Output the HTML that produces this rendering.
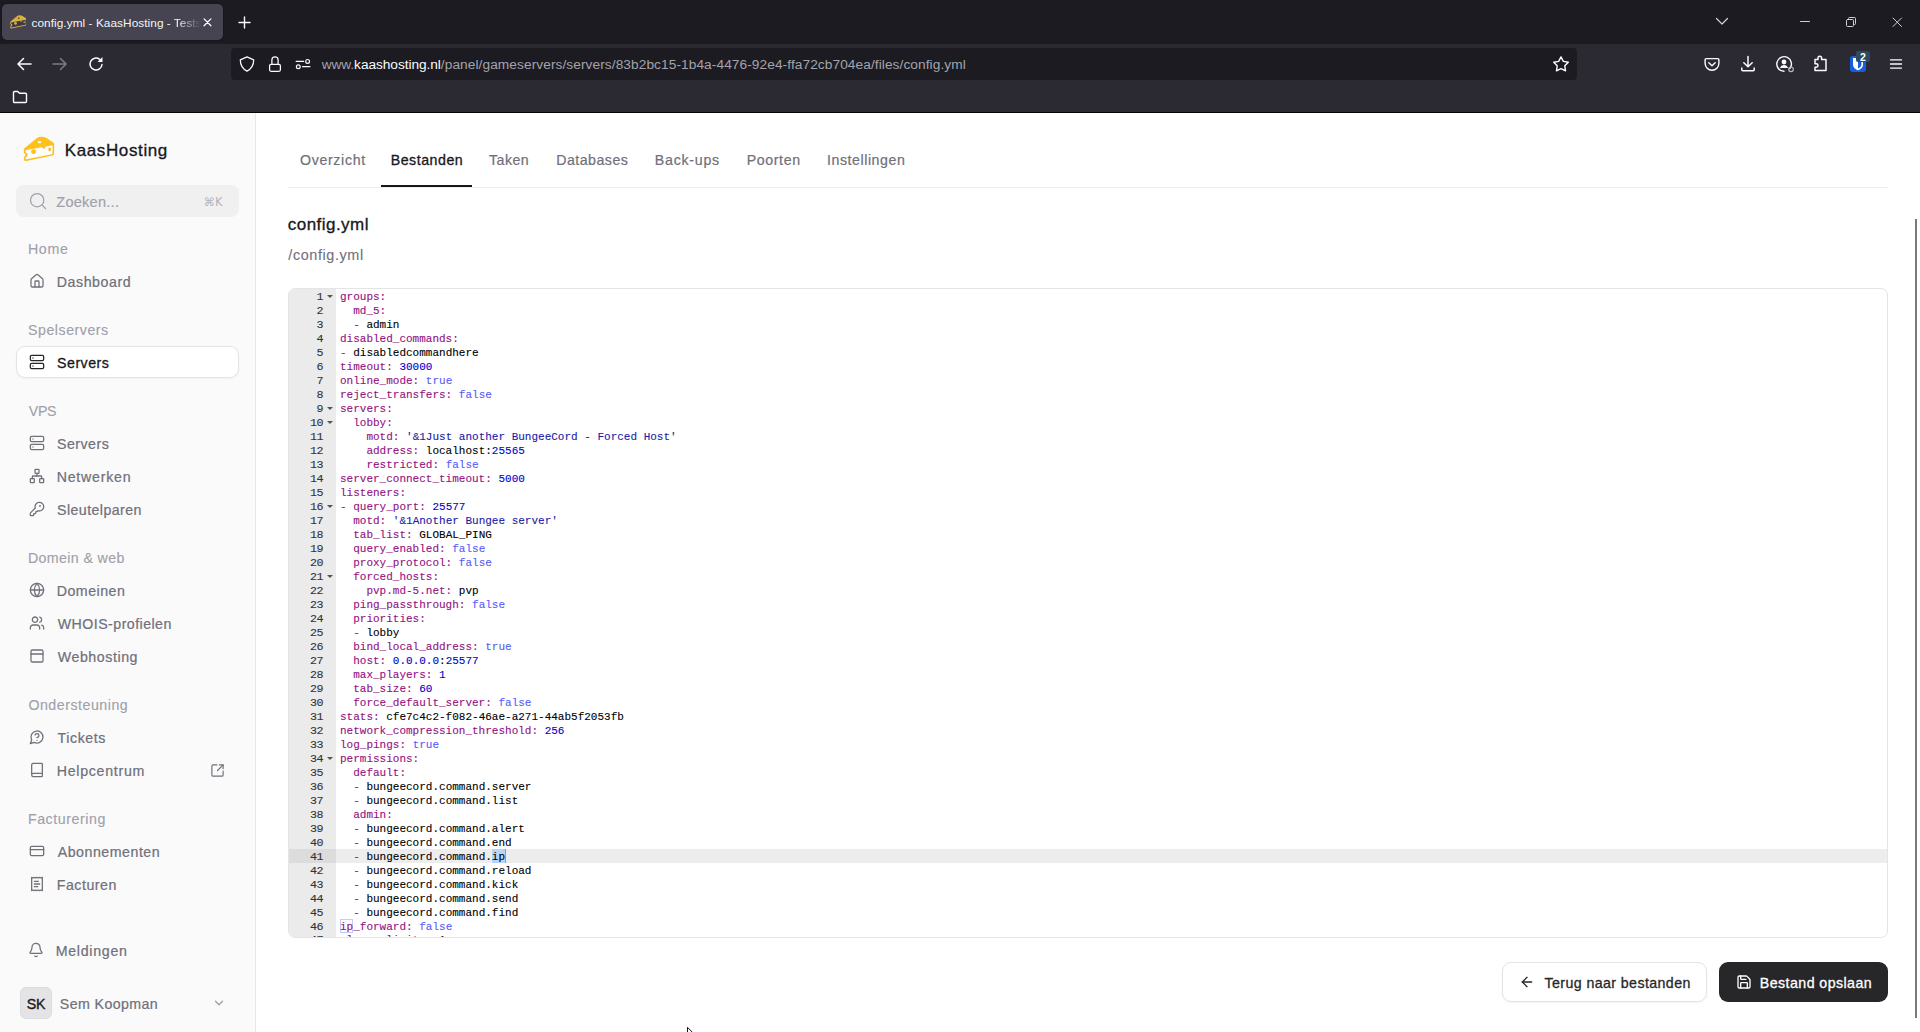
<!DOCTYPE html>
<html lang="nl"><head><meta charset="utf-8"><title>config.yml - KaasHosting - Tests</title>
<style>
*{box-sizing:border-box;margin:0;padding:0}
html,body{width:1920px;height:1032px;overflow:hidden;background:#fff}
body{font-family:"Liberation Sans",sans-serif;position:relative;color:#18181b}
.abs{position:absolute}
.t{position:absolute;white-space:nowrap;line-height:1;transform:translateY(-50%)}
svg{display:block}
/* ---------- browser chrome ---------- */
#chrome{position:absolute;left:0;top:0;width:1920px;height:113px;background:#2b2a33}
#tabbar{position:absolute;left:0;top:0;width:1920px;height:44px;background:#1c1b22}
#tab{position:absolute;left:2px;top:4px;width:221px;height:36px;border-radius:5px;background:#454450;box-shadow:0 0 2px rgba(0,0,0,.5)}
#tabrest{-webkit-mask-image:linear-gradient(90deg,#000 0,#000 12px,transparent 34px);mask-image:linear-gradient(90deg,#000 0,#000 12px,transparent 34px)}
#urlbar{position:absolute;left:231px;top:48px;width:1346px;height:32px;border-radius:4px;background:#1c1b22}
#chromeline{position:absolute;left:0;top:112px;width:1920px;height:1px;background:#050507}
.ci{position:absolute;stroke:#fbfbfe;fill:none;stroke-width:1.3;stroke-linecap:round;stroke-linejoin:round}
/* ---------- sidebar ---------- */
#side{position:absolute;left:0;top:113px;width:256px;height:919px;background:#fafafa;border-right:1px solid #e7e7e9}
.sh{color:#a0a0ab;font-size:14.4px;left:28px}
.si{color:#70707b;font-size:14.7px;font-weight:400;left:57px;letter-spacing:.1px;-webkit-text-stroke:.35px #70707b}
.ic{position:absolute;left:29px;width:16px;height:16px;stroke:#70707b;fill:none;stroke-width:1.25;stroke-linecap:round;stroke-linejoin:round}
/* ---------- main ---------- */
.tab{font-size:15.2px;color:#70707b;top:160px;-webkit-text-stroke:.3px #70707b}
#ed{position:absolute;left:288px;top:288px;width:1600px;height:650px;border:1px solid #e4e4e7;border-radius:7px;overflow:hidden;background:#fff;
 font-family:"Liberation Mono",monospace;font-size:11px;line-height:14px}
#gut{position:absolute;left:0;top:0;width:47px;height:100%;background:#ebebeb}
.ln{position:absolute;left:0;width:34.1px;text-align:right;color:#333;height:14px;white-space:pre;font-size:11.7px;letter-spacing:-.42px;-webkit-text-stroke:.1px #333}
.fold{position:absolute;left:37.8px;width:0;height:0;border-left:3.1px solid transparent;border-right:3.1px solid transparent;border-top:3.6px solid #555}
.cl{position:absolute;left:51px;height:14px;white-space:pre;color:#000;-webkit-text-stroke:.1px currentColor}
.k{color:#930f80}.l{color:#b90690}.n{color:#0000cd}.b{color:#585cf6}.s{color:#1a1aa6}
</style></head><body>
<div id="chrome">
 <div id="tabbar"></div>
 <div id="tab"></div>
 <!-- favicon cheese -->
 <svg class="abs" style="left:9.600px;top:14.900px" width="16.800" height="13.900" viewBox="23.300 136.200 31.300 25.700" preserveAspectRatio="none"><path d="M23.800 149.400 Q23.800 148.700 24.400 148.200 L37.300 137.800 Q38.600 136.700 41 136.700 Q44.500 136.700 46.500 137.900 L53.300 142.500 Q54.100 143.100 54.100 144.200 L54.100 153.800 Q54.100 155.300 52.700 155.600 L26.200 161 Q23.800 161.400 23.800 159.300 L23.800 157.800 L25.600 154.800 L23.800 152.600 Z" fill="#d9b23e"/>
<path d="M25.600 150.200 L52.500 145.200 L52.500 153.400 Q52.500 154.100 51.800 154.250 L26.600 159.300 Q25.500 159.500 25.500 158.500 L25.500 158 L28 154.800 L25.500 151.800 Z" fill="#3b3a47"/>
<path d="M41.800 147 L46.300 146.100 L44.600 148.500 Q43.800 149.200 43.100 148.500 Z" fill="#d9b23e"/>
<ellipse cx="33.600" cy="151.700" rx="2.500" ry="2.400" fill="#d9b23e"/>
<ellipse cx="49.700" cy="149.400" rx="1.400" ry="1.800" fill="#d9b23e"/>
<rect x="37.900" y="141" width="3.200" height="2.300" rx=".7" fill="#3b3a47"/></svg>
 <div class="t " id="t34" style="left:31.50px;top:23.60px;font-size:11.8px;color:#f4f4f8;letter-spacing:0.065px;">config.yml - KaasHosting</div><div class="t" id="tabrest" style="left:166.7px;top:23.6px;font-size:11.8px;color:#f4f4f8;letter-spacing:0.065px">- Tests</div>
 <svg class="ci" style="left:202px;top:17px;stroke-width:1.300" width="11" height="11" viewBox="0 0 11 11"><path d="M2.100 1.900l6.800 6.800M8.900 1.900l-6.800 6.800"/></svg>
 <svg class="ci" style="left:238px;top:16px;stroke-width:1.4" width="13" height="13" viewBox="0 0 13 13"><path d="M6.5 1v11M1 6.5h11"/></svg>
 <!-- window controls -->
 <svg class="ci" style="left:1715px;top:17px;stroke:#d0cfd6;stroke-width:1.2" width="14" height="9" viewBox="0 0 14 9"><path d="M1.500 1.500l5.500 5.500 5.500-5.500"/></svg>
 <svg class="ci" style="left:1799px;top:20px;stroke:#d0cfd6;stroke-width:1" width="12" height="3" viewBox="0 0 12 3"><path d="M1.500 1.500h9"/></svg>
 <svg class="ci" style="left:1845px;top:16px;stroke:#d0cfd6;stroke-width:1" width="12" height="12" viewBox="0 0 12 12"><rect x="1.5" y="3.5" width="7" height="7" rx="1"/><path d="M3.5 3.5v-1a1 1 0 0 1 1-1h5a1 1 0 0 1 1 1v5a1 1 0 0 1-1 1h-1"/></svg>
 <svg class="ci" style="left:1891px;top:16px;stroke:#d0cfd6;stroke-width:1" width="12" height="12" viewBox="0 0 12 12"><path d="M2 2l8.500 8.500M10.500 2L2 10.500"/></svg>
 <!-- nav buttons -->
 <svg class="ci" style="left:16px;top:56px;stroke-width:1.5" width="16" height="16" viewBox="0 0 16 16"><path d="M15 8H2M7.5 2.5L2 8l5.500 5.500"/></svg>
 <svg class="ci" style="left:52px;top:56px;stroke:#7d7c85;stroke-width:1.5" width="16" height="16" viewBox="0 0 16 16"><path d="M1 8h13M8.500 2.500L14 8l-5.500 5.500"/></svg>
 <svg class="ci" style="left:88px;top:56px;stroke-width:1.5" width="16" height="16" viewBox="0 0 16 16"><path d="M14 8.500a6 6 0 1 1-2.300-5.200"/><path d="M14.500 1v5h-5z" fill="#fbfbfe" stroke="none"/></svg>
 <div id="urlbar"></div>
 <svg class="ci" style="left:239px;top:56px;stroke-width:1.250" width="16" height="16" viewBox="0 0 16 16"><path d="M8 .9L1.300 3.900c0 5.200 2 8.600 6.700 11.200 4.700-2.600 6.700-6 6.700-11.200z"/></svg>
 <svg class="ci" style="left:267px;top:56px;stroke-width:1.250" width="16" height="16" viewBox="0 0 16 16"><rect x="2.600" y="8.300" width="10.800" height="7" rx="1.500"/><path d="M4.900 8.300V3.900a3.100 3.100 0 0 1 6.200 0V8.300"/></svg>
 <svg class="ci" style="left:295px;top:56px;stroke-width:1.200" width="16" height="16" viewBox="0 0 16 16"><path d="M1.200 5.400h7.400"/><circle cx="12.600" cy="5.400" r="1.900"/><path d="M7.500 10.700h7.400"/><circle cx="3.300" cy="10.700" r="1.900"/></svg>
 <div class="t " id="t35" style="left:321.63px;top:65.40px;font-size:13.7px;color:#fbfbfe;letter-spacing:-0.058px;"><span style="color:#a4a3ab">www.</span>kaashosting.nl</div><div class="t " id="t36" style="left:440.84px;top:65.40px;font-size:13.7px;color:#a4a3ab;letter-spacing:0.079px;">/panel/gameservers/servers/83b2bc15-1b4a-4476-92e4-ffa72cb704ea/files/config.yml</div>
 <svg class="ci" style="left:1552px;top:55px;stroke-width:1.4" width="18" height="18" viewBox="0 0 18 18"><path d="M9.00 1.90 L11.35 6.36 L16.32 7.22 L12.80 10.84 L13.53 15.83 L9.00 13.60 L4.47 15.83 L5.20 10.84 L1.68 7.22 L6.65 6.36Z"/></svg>
 <!-- right toolbar -->
 <svg class="ci" style="left:1703px;top:56px;stroke-width:1.400" width="18" height="16" viewBox="0 0 18 16"><path d="M3.200 2.600h11.600a1.100 1.100 0 0 1 1.100 1.100v3.600a6.900 6.900 0 0 1-13.800 0V3.700A1.100 1.100 0 0 1 3.200 2.600z"/><path d="M5.800 6.800L9 9.800l3.200-3"/></svg>
 <svg class="ci" style="left:1740px;top:55px;stroke-width:1.5" width="16" height="18" viewBox="0 0 16 18"><path d="M8 1.500v10M3.800 7.700L8 11.800l4.200-4.100M1.800 13v1.800a1 1 0 0 0 1 1h10.400a1 1 0 0 0 1-1V13"/></svg>
 <svg class="ci" style="left:1775px;top:55px;stroke-width:1.4" width="20" height="18" viewBox="0 0 20 18"><path d="M14.800 13.600A7.300 7.300 0 1 0 9 16.300"/><circle cx="9" cy="7" r="2.400" fill="#fbfbfe" stroke="none"/><path d="M5 13a4.200 4.200 0 0 1 8 0z" fill="#fbfbfe" stroke="none"/><circle cx="16" cy="14.300" r="2.300" stroke="#b8b7bf" stroke-width="1.200"/></svg>
 <svg class="ci" style="left:1812px;top:55px;stroke-width:1.5" width="16" height="18" viewBox="0 0 16 18"><path d="M6 4.500V3a1.800 1.800 0 0 1 3.600 0v1.500H14v11H3v-3.300h1.300a1.700 1.700 0 0 0 0-3.400H3V4.500z"/></svg>
 <div class="abs" style="left:1850px;top:56px;width:16px;height:16px;border-radius:3px;background:#175ddc"></div>
 <svg class="abs" style="left:1852px;top:57px" width="12" height="14" viewBox="0 0 12 14"><path d="M1 1h10v6.500c0 3-2.500 4.800-5 5.800-2.500-1-5-2.800-5-5.800z" fill="#fff"/><path d="M6 2.600h3.400v4.900c0 1.900-1.600 3.200-3.400 4z" fill="#175ddc"/></svg>
 <div class="abs" style="left:1856px;top:51px;width:14px;height:11px;border-radius:2px;background:#2d4b5c"></div>
 <div class="t" style="left:1860px;top:57px;font-size:10.500px;font-weight:700;color:#fff">2</div>
 <svg class="ci" style="left:1889px;top:58px;stroke-width:1.300" width="14" height="12" viewBox="0 0 14 12"><path d="M1.500 1.900h11M1.500 6h11M1.500 10.100h11"/></svg>
 <!-- bookmarks folder -->
 <svg class="ci" style="left:12px;top:89px;stroke-width:1.400" width="16" height="16" viewBox="0 0 16 16"><path d="M1.500 3.500a1 1 0 0 1 1-1h3.300l1.700 1.800h6a1 1 0 0 1 1 1v7.200a1 1 0 0 1-1 1h-11a1 1 0 0 1-1-1z"/></svg>
 <div id="chromeline"></div>
</div>

<div id="side">
<svg class="abs" style="left:16px;top:15px" width="48" height="40" viewBox="16 128 48 40"><path d="M23.800 149.400 Q23.800 148.700 24.400 148.200 L37.300 137.800 Q38.600 136.700 41 136.700 Q44.500 136.700 46.500 137.900 L53.300 142.500 Q54.100 143.100 54.100 144.200 L54.100 153.800 Q54.100 155.300 52.700 155.600 L26.200 161 Q23.800 161.400 23.800 159.300 L23.800 157.800 L25.600 154.800 L23.800 152.600 Z" fill="#fdc01c"/>
<path d="M25.600 150.200 L52.500 145.200 L52.500 153.400 Q52.500 154.100 51.800 154.250 L26.600 159.300 Q25.500 159.500 25.500 158.500 L25.500 158 L28 154.800 L25.500 151.800 Z" fill="#fdfdfd"/>
<path d="M41.800 147 L46.300 146.100 L44.600 148.500 Q43.800 149.200 43.100 148.500 Z" fill="#fdc01c"/>
<ellipse cx="33.600" cy="151.700" rx="2.500" ry="2.400" fill="#fdc01c"/>
<ellipse cx="49.700" cy="149.400" rx="1.400" ry="1.800" fill="#fdc01c"/>
<rect x="37.900" y="141" width="3.200" height="2.300" rx=".7" fill="#fdfdfd"/></svg>
<div class="t " id="t0" style="left:64.72px;top:36.80px;font-size:17px;color:#18181b;letter-spacing:0.622px;-webkit-text-stroke:0.33px #18181b;">KaasHosting</div>
<div class="abs" style="left:16px;top:72px;width:223px;height:32px;border-radius:8px;background:#f0f0f1"></div>
<svg class="ic" style="left:27.7px;top:77.80000000000001px;width:20px;height:20px;stroke:#a0a0ab;stroke-width:1.5;" viewBox="0 0 24 24"><circle cx="11" cy="11" r="8"/><path d="m21 21-4.300-4.300"/></svg>
<div class="t " id="t1" style="left:56.26px;top:89.00px;font-size:14.6px;color:#a0a0ab;letter-spacing:0.231px;-webkit-text-stroke:0.15px #a0a0ab;">Zoeken...</div>
<div class="t" style="left:203.500px;top:90px;font-size:11.500px;color:#b4b4bd;font-family:'DejaVu Sans','Liberation Sans',sans-serif">⌘K</div>
<div class="t " id="t2" style="left:27.93px;top:136.00px;font-size:14.2px;color:#a0a0ab;letter-spacing:0.702px;-webkit-text-stroke:0.12px #a0a0ab;">Home</div>
<svg class="ic" style="left:29px;top:160.0px;width:16px;height:16px;stroke:#70707b;stroke-width:1.9;" viewBox="0 0 24 24"><path d="M15 21v-8a1 1 0 0 0-1-1h-4a1 1 0 0 0-1 1v8"/><path d="M3 10a2 2 0 0 1 .709-1.528l7-5.999a2 2 0 0 1 2.582 0l7 5.999A2 2 0 0 1 21 10v9a2 2 0 0 1-2 2H5a2 2 0 0 1-2-2z"/></svg>
<div class="t " id="t3" style="left:56.74px;top:168.70px;font-size:14.2px;color:#70707b;letter-spacing:0.560px;-webkit-text-stroke:0.22px #70707b;">Dashboard</div>
<div class="t " id="t4" style="left:28.08px;top:217.00px;font-size:14.2px;color:#a0a0ab;letter-spacing:0.514px;-webkit-text-stroke:0.12px #a0a0ab;">Spelservers</div>
<div class="abs" style="left:16px;top:233px;width:223px;height:32px;border-radius:9px;background:#fff;border:1px solid #e4e4e7;box-shadow:0 1px 2px rgba(0,0,0,.04)"></div>
<svg class="ic" style="left:29px;top:241.0px;width:16px;height:16px;stroke:#27272a;stroke-width:1.9;" viewBox="0 0 24 24"><rect width="20" height="8" x="2" y="2" rx="2" ry="2"/><rect width="20" height="8" x="2" y="14" rx="2" ry="2"/><path d="M6 6h.01M6 18h.01"/></svg>
<div class="t " id="t5" style="left:57.11px;top:249.70px;font-size:14.2px;color:#18181b;letter-spacing:0.465px;-webkit-text-stroke:0.3px #18181b;">Servers</div>
<div class="t " id="t6" style="left:28.74px;top:298.00px;font-size:14.2px;color:#a0a0ab;letter-spacing:-0.284px;-webkit-text-stroke:0.12px #a0a0ab;">VPS</div>
<svg class="ic" style="left:29px;top:322.0px;width:16px;height:16px;stroke:#70707b;stroke-width:1.9;" viewBox="0 0 24 24"><rect width="20" height="8" x="2" y="2" rx="2" ry="2"/><rect width="20" height="8" x="2" y="14" rx="2" ry="2"/><path d="M6 6h.01M6 18h.01"/></svg>
<div class="t " id="t7" style="left:56.99px;top:330.70px;font-size:14.2px;color:#70707b;letter-spacing:0.489px;-webkit-text-stroke:0.22px #70707b;">Servers</div>
<svg class="ic" style="left:29px;top:355.0px;width:16px;height:16px;stroke:#70707b;stroke-width:1.9;" viewBox="0 0 24 24"><rect x="16" y="16" width="6" height="6" rx="1"/><rect x="2" y="16" width="6" height="6" rx="1"/><rect x="9" y="2" width="6" height="6" rx="1"/><path d="M5 16v-3a1 1 0 0 1 1-1h12a1 1 0 0 1 1 1v3"/><path d="M12 12V8"/></svg>
<div class="t " id="t8" style="left:56.74px;top:363.70px;font-size:14.2px;color:#70707b;letter-spacing:0.750px;-webkit-text-stroke:0.22px #70707b;">Netwerken</div>
<svg class="ic" style="left:29px;top:388.0px;width:16px;height:16px;stroke:#70707b;stroke-width:1.9;" viewBox="0 0 24 24"><path d="M2.586 17.414A2 2 0 0 0 2 18.828V21a1 1 0 0 0 1 1h3a1 1 0 0 0 1-1v-1a1 1 0 0 1 1-1h1a1 1 0 0 0 1-1v-1a1 1 0 0 1 1-1h.172a2 2 0 0 0 1.414-.586l.814-.814a6.500 6.500 0 1 0-4-4z"/><circle cx="16.500" cy="7.500" r=".5"/></svg>
<div class="t " id="t9" style="left:56.99px;top:396.70px;font-size:14.2px;color:#70707b;letter-spacing:0.441px;-webkit-text-stroke:0.22px #70707b;">Sleutelparen</div>
<div class="t " id="t10" style="left:27.93px;top:445.00px;font-size:14.2px;color:#a0a0ab;letter-spacing:0.378px;-webkit-text-stroke:0.12px #a0a0ab;">Domein &amp; web</div>
<svg class="ic" style="left:29px;top:469.0px;width:16px;height:16px;stroke:#70707b;stroke-width:1.9;" viewBox="0 0 24 24"><circle cx="12" cy="12" r="10"/><path d="M12 2a14.500 14.500 0 0 0 0 20 14.500 14.500 0 0 0 0-20"/><path d="M2 12h20"/></svg>
<div class="t " id="t11" style="left:56.74px;top:477.70px;font-size:14.2px;color:#70707b;letter-spacing:0.490px;-webkit-text-stroke:0.22px #70707b;">Domeinen</div>
<svg class="ic" style="left:29px;top:502.0px;width:16px;height:16px;stroke:#70707b;stroke-width:1.9;" viewBox="0 0 24 24"><path d="M16 21v-2a4 4 0 0 0-4-4H6a4 4 0 0 0-4 4v2"/><circle cx="9" cy="7" r="4"/><path d="M22 21v-2a4 4 0 0 0-3-3.870"/><path d="M16 3.130a4 4 0 0 1 0 7.750"/></svg>
<div class="t " id="t12" style="left:57.78px;top:510.70px;font-size:14.2px;color:#70707b;letter-spacing:0.455px;-webkit-text-stroke:0.22px #70707b;">WHOIS-profielen</div>
<svg class="ic" style="left:29px;top:535.0px;width:16px;height:16px;stroke:#70707b;stroke-width:1.9;" viewBox="0 0 24 24"><rect width="18" height="18" x="3" y="3" rx="2"/><path d="M3 9h18"/></svg>
<div class="t " id="t13" style="left:57.78px;top:543.70px;font-size:14.2px;color:#70707b;letter-spacing:0.564px;-webkit-text-stroke:0.22px #70707b;">Webhosting</div>
<div class="t " id="t14" style="left:28.39px;top:592.00px;font-size:14.2px;color:#a0a0ab;letter-spacing:0.521px;-webkit-text-stroke:0.12px #a0a0ab;">Ondersteuning</div>
<svg class="ic" style="left:29px;top:616.0px;width:16px;height:16px;stroke:#70707b;stroke-width:1.9;" viewBox="0 0 24 24"><path d="M7.900 20A9 9 0 1 0 4 16.100L2 22Z"/><path d="M9.090 9a3 3 0 0 1 5.830 1c0 2-3 3-3 3"/><path d="M12 17h.01"/></svg>
<div class="t " id="t15" style="left:57.60px;top:624.70px;font-size:14.2px;color:#70707b;letter-spacing:0.570px;-webkit-text-stroke:0.22px #70707b;">Tickets</div>
<svg class="ic" style="left:29px;top:649.0px;width:16px;height:16px;stroke:#70707b;stroke-width:1.9;" viewBox="0 0 24 24"><path d="M4 19.500v-15A2.500 2.500 0 0 1 6.500 2H19a1 1 0 0 1 1 1v18a1 1 0 0 1-1 1H6.500a1 1 0 0 1 0-5H20"/></svg>
<div class="t " id="t16" style="left:56.74px;top:657.70px;font-size:14.2px;color:#70707b;letter-spacing:0.715px;-webkit-text-stroke:0.22px #70707b;">Helpcentrum</div>
<svg class="ic" style="left:210px;top:649.5px;width:15px;height:15px;stroke:#70707b;stroke-width:1.9;" viewBox="0 0 24 24"><path d="M21 13v6a2 2 0 0 1-2 2H5a2 2 0 0 1-2-2V5a2 2 0 0 1 2-2h6"/><path d="m21 3-9 9"/><path d="M15 3h6v6"/></svg>
<div class="t " id="t17" style="left:27.93px;top:706.00px;font-size:14.2px;color:#a0a0ab;letter-spacing:0.566px;-webkit-text-stroke:0.12px #a0a0ab;">Facturering</div>
<svg class="ic" style="left:29px;top:730.0px;width:16px;height:16px;stroke:#70707b;stroke-width:1.9;" viewBox="0 0 24 24"><rect width="20" height="14" x="2" y="5" rx="2"/><path d="M2 10h20"/></svg>
<div class="t " id="t18" style="left:57.71px;top:738.70px;font-size:14.2px;color:#70707b;letter-spacing:0.519px;-webkit-text-stroke:0.22px #70707b;">Abonnementen</div>
<svg class="ic" style="left:29px;top:763.0px;width:16px;height:16px;stroke:#70707b;stroke-width:1.9;" viewBox="0 0 24 24"><path d="M4 2v20l2-1 2 1 2-1 2 1 2-1 2 1 2-1 2 1V2l-2 1-2-1-2 1-2-1-2 1-2-1-2 1Z"/><path d="M14 8H8"/><path d="M16 12H8"/><path d="M13 16H8"/></svg>
<div class="t " id="t19" style="left:56.74px;top:771.70px;font-size:14.2px;color:#70707b;letter-spacing:0.519px;-webkit-text-stroke:0.22px #70707b;">Facturen</div>
<svg class="ic" style="left:28px;top:829.0px;width:16px;height:16px;stroke:#70707b;stroke-width:1.9;" viewBox="0 0 24 24"><path d="M10.268 21a2 2 0 0 0 3.464 0"/><path d="M3.262 15.326A1 1 0 0 0 4 17h16a1 1 0 0 0 .74-1.673C19.410 13.956 18 12.499 18 8A6 6 0 0 0 6 8c0 4.499-1.411 5.956-2.738 7.326"/></svg>
<div class="t " id="t20" style="left:55.65px;top:837.70px;font-size:14.2px;color:#70707b;letter-spacing:0.736px;-webkit-text-stroke:0.22px #70707b;">Meldingen</div>
<div class="abs" style="left:20px;top:874px;width:32px;height:32px;border-radius:6px;background:#e4e4e7;border:1px solid #dcdce0"></div>
<div class="t " id="t21" style="left:26.78px;top:891.00px;font-size:14.2px;color:#18181b;letter-spacing:-0.144px;-webkit-text-stroke:0.35px #18181b;">SK</div>
<div class="t " id="t22" style="left:59.81px;top:890.70px;font-size:14.2px;color:#70707b;letter-spacing:0.402px;-webkit-text-stroke:0.22px #70707b;">Sem Koopman</div>
<svg class="ic" style="left:212px;top:883.0px;width:14px;height:14px;stroke:#a0a0ab;stroke-width:2.3;" viewBox="0 0 24 24"><path d="m6 9 6 6 6-6"/></svg>
</div>
<div class="t " id="t23" style="left:300.03px;top:160.00px;font-size:14.2px;color:#70707b;letter-spacing:0.647px;-webkit-text-stroke:0.2px #70707b;">Overzicht</div>
<div class="t " id="t24" style="left:390.65px;top:160.00px;font-size:14.2px;color:#18181b;letter-spacing:0.528px;-webkit-text-stroke:0.3px #18181b;">Bestanden</div>
<div class="t " id="t25" style="left:488.98px;top:160.00px;font-size:14.2px;color:#70707b;letter-spacing:0.472px;-webkit-text-stroke:0.2px #70707b;">Taken</div>
<div class="t " id="t26" style="left:556.22px;top:160.00px;font-size:14.2px;color:#70707b;letter-spacing:0.476px;-webkit-text-stroke:0.2px #70707b;">Databases</div>
<div class="t " id="t27" style="left:654.83px;top:160.00px;font-size:14.2px;color:#70707b;letter-spacing:0.732px;-webkit-text-stroke:0.2px #70707b;">Back-ups</div>
<div class="t " id="t28" style="left:746.64px;top:160.00px;font-size:14.2px;color:#70707b;letter-spacing:0.621px;-webkit-text-stroke:0.2px #70707b;">Poorten</div>
<div class="t " id="t29" style="left:827.05px;top:160.00px;font-size:14.2px;color:#70707b;letter-spacing:0.542px;-webkit-text-stroke:0.2px #70707b;">Instellingen</div>
<div class="abs" style="left:288px;top:187px;width:1600px;height:1px;background:#efeff1"></div>
<div class="abs" style="left:381px;top:185px;width:91px;height:2px;background:#18181b"></div>
<div class="t " id="t30" style="left:287.76px;top:223.60px;font-size:17px;color:#18181b;letter-spacing:0.463px;-webkit-text-stroke:0.33px #18181b;">config.yml</div>
<div class="t " id="t31" style="left:288.30px;top:255.30px;font-size:14.4px;color:#70707b;letter-spacing:0.604px;-webkit-text-stroke:0.1px #70707b;">/config.yml</div>
<div id="ed"><div id="gut"></div>
<div class="abs" style="left:0;top:560px;width:47px;height:14px;background:#dcdcdc"></div>
<div class="abs" style="left:47px;top:560px;width:1560px;height:14px;background:#ededed"></div>
<div class="abs" style="left:202.79999999999998px;top:560px;width:13.2px;height:14px;background:#b5d5ff"></div>
<div class="abs" style="left:216.0px;top:560px;width:1px;height:14px;background:#999"></div>
<div class="abs" style="left:51px;top:630px;width:13.2px;height:14px;background:#fafaff;border:1px solid #c8c8fa"></div>
<div class="ln" style="top:1px">1</div>
<div class="fold" style="top:5.8px"></div>
<div class="cl" style="top:1px"><span class="k">groups:</span></div>
<div class="ln" style="top:15px">2</div>
<div class="cl" style="top:15px">  <span class="k">md_5:</span></div>
<div class="ln" style="top:29px">3</div>
<div class="cl" style="top:29px">  <span class="l">-</span> admin</div>
<div class="ln" style="top:43px">4</div>
<div class="cl" style="top:43px"><span class="k">disabled_commands:</span></div>
<div class="ln" style="top:57px">5</div>
<div class="cl" style="top:57px"><span class="l">-</span> disabledcommandhere</div>
<div class="ln" style="top:71px">6</div>
<div class="cl" style="top:71px"><span class="k">timeout:</span> <span class="n">30000</span></div>
<div class="ln" style="top:85px">7</div>
<div class="cl" style="top:85px"><span class="k">online_mode:</span> <span class="b">true</span></div>
<div class="ln" style="top:99px">8</div>
<div class="cl" style="top:99px"><span class="k">reject_transfers:</span> <span class="b">false</span></div>
<div class="ln" style="top:113px">9</div>
<div class="fold" style="top:117.8px"></div>
<div class="cl" style="top:113px"><span class="k">servers:</span></div>
<div class="ln" style="top:127px">10</div>
<div class="fold" style="top:131.8px"></div>
<div class="cl" style="top:127px">  <span class="k">lobby:</span></div>
<div class="ln" style="top:141px">11</div>
<div class="cl" style="top:141px">    <span class="k">motd:</span> <span class="s">'&amp;1Just another BungeeCord - Forced Host'</span></div>
<div class="ln" style="top:155px">12</div>
<div class="cl" style="top:155px">    <span class="k">address:</span> localhost:<span class="n">25565</span></div>
<div class="ln" style="top:169px">13</div>
<div class="cl" style="top:169px">    <span class="k">restricted:</span> <span class="b">false</span></div>
<div class="ln" style="top:183px">14</div>
<div class="cl" style="top:183px"><span class="k">server_connect_timeout:</span> <span class="n">5000</span></div>
<div class="ln" style="top:197px">15</div>
<div class="cl" style="top:197px"><span class="k">listeners:</span></div>
<div class="ln" style="top:211px">16</div>
<div class="fold" style="top:215.8px"></div>
<div class="cl" style="top:211px"><span class="l">-</span> <span class="k">query_port:</span> <span class="n">25577</span></div>
<div class="ln" style="top:225px">17</div>
<div class="cl" style="top:225px">  <span class="k">motd:</span> <span class="s">'&amp;1Another Bungee server'</span></div>
<div class="ln" style="top:239px">18</div>
<div class="cl" style="top:239px">  <span class="k">tab_list:</span> GLOBAL_PING</div>
<div class="ln" style="top:253px">19</div>
<div class="cl" style="top:253px">  <span class="k">query_enabled:</span> <span class="b">false</span></div>
<div class="ln" style="top:267px">20</div>
<div class="cl" style="top:267px">  <span class="k">proxy_protocol:</span> <span class="b">false</span></div>
<div class="ln" style="top:281px">21</div>
<div class="fold" style="top:285.8px"></div>
<div class="cl" style="top:281px">  <span class="k">forced_hosts:</span></div>
<div class="ln" style="top:295px">22</div>
<div class="cl" style="top:295px">    <span class="k">pvp.md-5.net:</span> pvp</div>
<div class="ln" style="top:309px">23</div>
<div class="cl" style="top:309px">  <span class="k">ping_passthrough:</span> <span class="b">false</span></div>
<div class="ln" style="top:323px">24</div>
<div class="cl" style="top:323px">  <span class="k">priorities:</span></div>
<div class="ln" style="top:337px">25</div>
<div class="cl" style="top:337px">  <span class="l">-</span> lobby</div>
<div class="ln" style="top:351px">26</div>
<div class="cl" style="top:351px">  <span class="k">bind_local_address:</span> <span class="b">true</span></div>
<div class="ln" style="top:365px">27</div>
<div class="cl" style="top:365px">  <span class="k">host:</span> <span class="n">0.0.0.0</span>:<span class="n">25577</span></div>
<div class="ln" style="top:379px">28</div>
<div class="cl" style="top:379px">  <span class="k">max_players:</span> <span class="n">1</span></div>
<div class="ln" style="top:393px">29</div>
<div class="cl" style="top:393px">  <span class="k">tab_size:</span> <span class="n">60</span></div>
<div class="ln" style="top:407px">30</div>
<div class="cl" style="top:407px">  <span class="k">force_default_server:</span> <span class="b">false</span></div>
<div class="ln" style="top:421px">31</div>
<div class="cl" style="top:421px"><span class="k">stats:</span> cfe7c4c2-f082-46ae-a271-44ab5f2053fb</div>
<div class="ln" style="top:435px">32</div>
<div class="cl" style="top:435px"><span class="k">network_compression_threshold:</span> <span class="n">256</span></div>
<div class="ln" style="top:449px">33</div>
<div class="cl" style="top:449px"><span class="k">log_pings:</span> <span class="b">true</span></div>
<div class="ln" style="top:463px">34</div>
<div class="fold" style="top:467.8px"></div>
<div class="cl" style="top:463px"><span class="k">permissions:</span></div>
<div class="ln" style="top:477px">35</div>
<div class="cl" style="top:477px">  <span class="k">default:</span></div>
<div class="ln" style="top:491px">36</div>
<div class="cl" style="top:491px">  <span class="l">-</span> bungeecord.command.server</div>
<div class="ln" style="top:505px">37</div>
<div class="cl" style="top:505px">  <span class="l">-</span> bungeecord.command.list</div>
<div class="ln" style="top:519px">38</div>
<div class="cl" style="top:519px">  <span class="k">admin:</span></div>
<div class="ln" style="top:533px">39</div>
<div class="cl" style="top:533px">  <span class="l">-</span> bungeecord.command.alert</div>
<div class="ln" style="top:547px">40</div>
<div class="cl" style="top:547px">  <span class="l">-</span> bungeecord.command.end</div>
<div class="ln" style="top:561px">41</div>
<div class="cl" style="top:561px">  <span class="l">-</span> bungeecord.command.ip</div>
<div class="ln" style="top:575px">42</div>
<div class="cl" style="top:575px">  <span class="l">-</span> bungeecord.command.reload</div>
<div class="ln" style="top:589px">43</div>
<div class="cl" style="top:589px">  <span class="l">-</span> bungeecord.command.kick</div>
<div class="ln" style="top:603px">44</div>
<div class="cl" style="top:603px">  <span class="l">-</span> bungeecord.command.send</div>
<div class="ln" style="top:617px">45</div>
<div class="cl" style="top:617px">  <span class="l">-</span> bungeecord.command.find</div>
<div class="ln" style="top:631px">46</div>
<div class="cl" style="top:631px"><span class="k">ip_forward:</span> <span class="b">false</span></div>
<div class="ln" style="top:644px">47</div>
<div class="cl" style="top:644px"><span class="k">player_limit:</span> -1</div>
</div>
<div class="abs" style="left:1502px;top:962px;width:205px;height:40px;border-radius:9px;background:#fff;border:1px solid #e4e4e7;box-shadow:0 1px 2px rgba(0,0,0,.05)"></div>
<svg class="ic" style="left:1519px;top:974.0px;width:16px;height:16px;stroke:#27272a;stroke-width:2;" viewBox="0 0 24 24"><path d="m12 19-7-7 7-7"/><path d="M19 12H5"/></svg>
<div class="t " id="t32" style="left:1544.49px;top:982.50px;font-size:14.2px;color:#27272a;letter-spacing:0.412px;-webkit-text-stroke:0.3px #27272a;">Terug naar bestanden</div>
<div class="abs" style="left:1719px;top:962px;width:169px;height:40px;border-radius:9px;background:#27272a"></div>
<svg class="ic" style="left:1736px;top:974.0px;width:16px;height:16px;stroke:#fff;stroke-width:2;" viewBox="0 0 24 24"><path d="M15.200 3a2 2 0 0 1 1.400.6l3.800 3.800a2 2 0 0 1 .6 1.400V19a2 2 0 0 1-2 2H5a2 2 0 0 1-2-2V5a2 2 0 0 1 2-2z"/><path d="M17 21v-7a1 1 0 0 0-1-1H8a1 1 0 0 0-1 1v7"/><path d="M7 3v4a1 1 0 0 0 1 1h7"/></svg>
<div class="t " id="t33" style="left:1759.87px;top:982.50px;font-size:14.2px;color:#ffffff;letter-spacing:0.436px;-webkit-text-stroke:0.3px #ffffff;">Bestand opslaan</div>
<div class="abs" style="left:1915px;top:219px;width:2px;height:799px;background:#7a7a7a"></div>
<svg class="abs" style="left:684px;top:1024px" width="16" height="8" viewBox="684 1024 16 8"><path d="M687.500 1027.300 L687.500 1040 L696 1036 Z" fill="#fff" stroke="#14131c" stroke-width="1"/></svg>
</body></html>
